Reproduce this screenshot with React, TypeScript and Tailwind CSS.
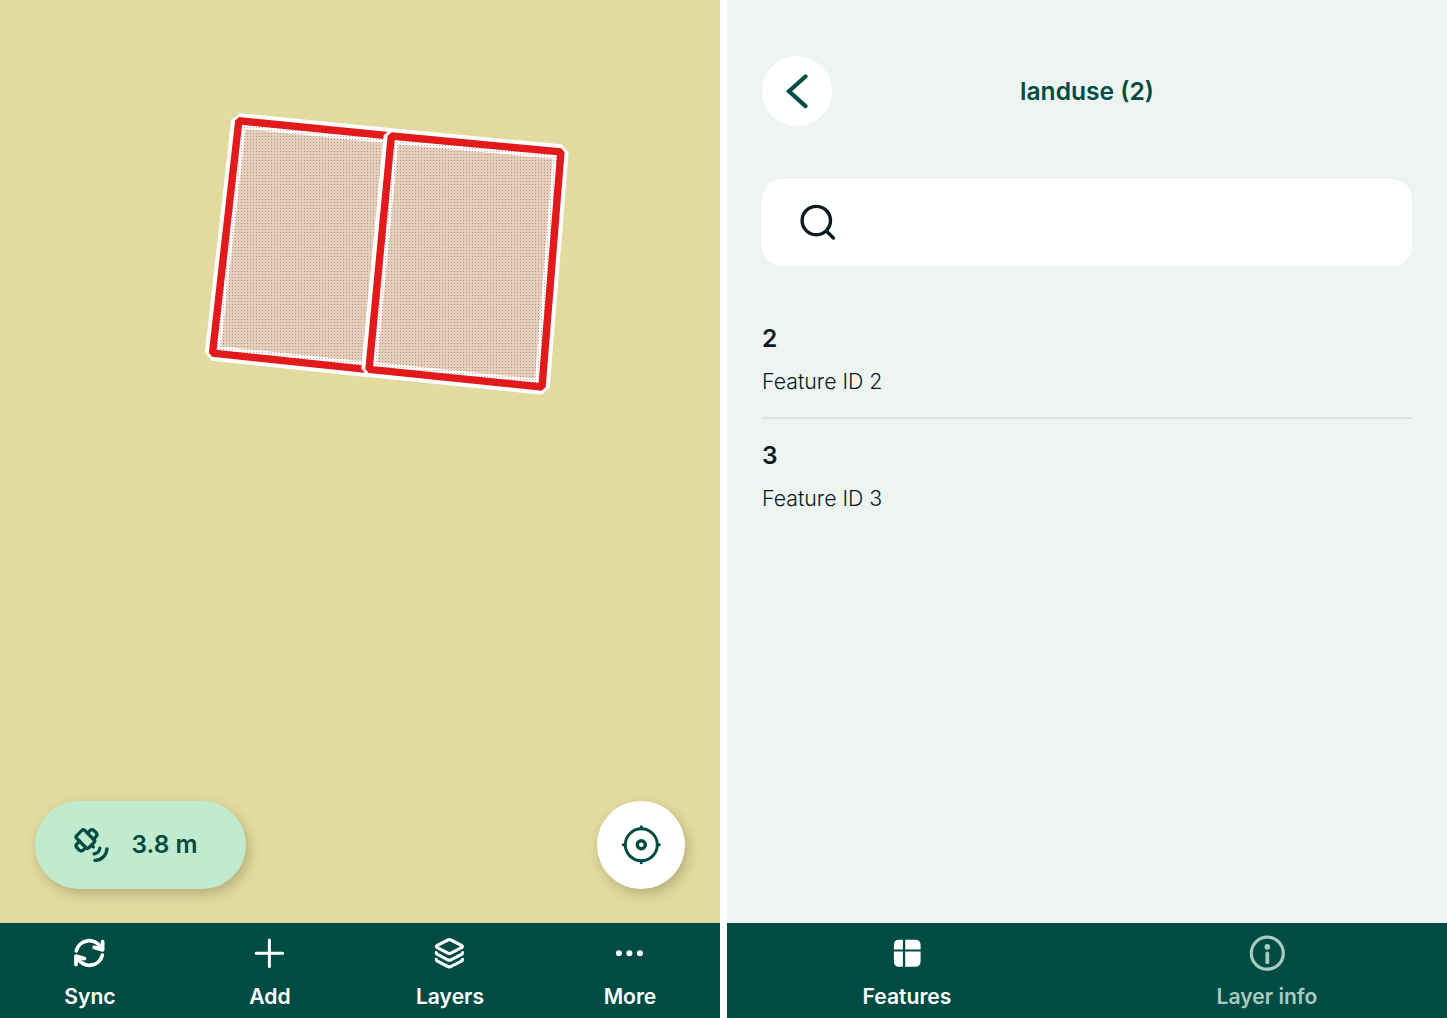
import React from "react";

type TabProps = { label: string; muted?: boolean; children: React.ReactNode };

function Tab({ label, muted, children }: TabProps) {
  return (
    <button
      className={
        "flex flex-1 flex-col items-center pt-2.5 text-[21.1px] leading-[26px] font-semibold " +
        (muted ? "text-[#a9cabd]" : "text-white")
      }
    >
      <span className="flex h-10 items-center justify-center">{children}</span>
      <span className="mt-[11px]">{label}</span>
    </button>
  );
}

function Parcel({ points }: { points: string }) {
  return (
    <g strokeLinejoin="bevel">
      <polygon points={points} fill="#e4cfba" stroke="white" strokeWidth="15.4" />
      <polygon points={points} fill="url(#dots)" />
      <polygon points={points} fill="none" stroke="#e31a1c" strokeWidth="7.4" />
    </g>
  );
}

function MapPanel() {
  return (
    <section className="flex w-[720px] flex-col bg-[#e2da9f]">
      <div className="relative flex-1">
        <svg className="absolute inset-0" width="720" height="923" viewBox="0 0 720 923">
          <defs>
            <pattern id="dots" width="3" height="3" patternUnits="userSpaceOnUse">
              <rect x="1" y="1" width="1" height="1" fill="#b97168" fillOpacity="0.65" />
            </pattern>
          </defs>
          <Parcel points="238.8,120.8 391.3,136 369,369.6 212.5,353.1" />
          <Parcel points="391.3,136 560.9,151.9 542,387 369,369.4" />
        </svg>
        <div className="absolute inset-x-[35px] bottom-[34px] flex items-center justify-between">
          <div className="flex h-[88px] w-[211px] items-center rounded-full bg-[#c1ebcf] pl-[38px] text-[#004c45] shadow-[3px_5px_12px_rgba(60,50,10,0.25)]">
            <svg width="36" height="36" viewBox="0 0 36 36" fill="none" stroke="currentColor" strokeWidth="3.3" strokeLinecap="round" strokeLinejoin="round">
              <g transform="translate(.7 .3)">
                <path d="M2.8 8.5 8.5 2.8Q9.7 1.8 10.8 2.8L20.5 12.7Q21.6 13.8 20.5 15L14.8 20.7Q13.6 21.6 12.5 20.7L2.8 10.8Q1.8 9.7 2.8 8.5Z" />
                <path d="M13.8 5.8 16.6 3Q18.3 1.6 20 3L22.6 5.6Q24 7.3 22.6 9L19.6 12" />
                <path d="M6 13.8 3 16.8Q1.6 18.5 3 20.2L5.8 23Q7.5 24.4 9.2 23L12.2 20" />
                <path d="m18.4 18.4 1.2 1.2M26.1 20.8a6.3 6.3 0 0 1-5.7 5.7M33.2 21.5a12 12 0 0 1-12 11.6" />
              </g>
            </svg>
            <span className="-mt-0.5 ml-[22.5px] text-[24.4px] font-semibold">3.8 m</span>
          </div>
          <button className="flex size-[88px] items-center justify-center rounded-full bg-white text-[#004c45] shadow-[3px_5px_12px_rgba(60,50,10,0.25)]">
            <svg width="40" height="40" viewBox="0 0 40 40" fill="none" stroke="currentColor" strokeWidth="3" strokeLinecap="round">
              <circle cx="20.3" cy="19.8" r="16" />
              <circle cx="20.3" cy="19.8" r="4" strokeWidth="3.4" />
              <path d="M20.3 1.8v2M20.3 35.8v2M2.3 19.8h2M36.3 19.8h2" />
            </svg>
          </button>
        </div>
      </div>
      <nav className="flex h-[95px] bg-[#004c45]">
        <Tab label="Sync">
          <svg className="-ml-0.5" width="34" height="34" viewBox="0 0 34 34" fill="none" stroke="currentColor" strokeWidth="3.8" strokeLinecap="round" strokeLinejoin="round">
            <path d="M4.3 14.8A13.2 13.2 0 0 1 28.8 11.8" />
            <path d="M30.6 5.6v8.2L22.2 11.4" />
            <path d="M30.3 19.2A13.2 13.2 0 0 1 5.8 22.2" />
            <path d="M4 28.4v-8.2L12.4 22.6" />
            <path d="M27.5 10.5 30.6 8v5.8ZM7.1 23.5 4 26v-5.8Z" fill="currentColor" strokeWidth="2" />
          </svg>
        </Tab>
        <Tab label="Add">
          <svg className="-ml-0.5" width="32" height="32" viewBox="0 0 32 32" fill="none" stroke="currentColor" strokeWidth="3" strokeLinecap="round">
            <path d="M16.4 3v26.4M3.2 16.2h26.4" />
          </svg>
        </Tab>
        <Tab label="Layers">
          <svg className="-ml-0.5" width="32" height="32" viewBox="0 0 32 32" fill="none" stroke="currentColor" strokeWidth="3.1" strokeLinecap="round" strokeLinejoin="round">
            <g transform="translate(.4 .2)">
              <path d="M14.5 2.8Q16 2 17.5 2.8L28.1 8.1Q30.1 9.3 28.1 10.5L17.5 15.9Q16 16.7 14.5 15.9L3.9 10.5Q1.9 9.3 3.9 8.1Z" />
              <path d="M2.8 15.3Q2.8 16.6 4 17.2L14.5 22.6Q16 23.4 17.5 22.6L28 17.2Q29.2 16.6 29.2 15.3" />
              <path d="M2.8 22Q2.8 23.3 4 23.9L14.5 29.3Q16 30.1 17.5 29.3L28 23.9Q29.2 23.3 29.2 22" />
            </g>
          </svg>
        </Tab>
        <Tab label="More">
          <svg className="-ml-0.5" width="28" height="8" viewBox="0 0 28 8" fill="currentColor">
            <circle cx="3.9" cy="4.2" r="3" />
            <circle cx="14.4" cy="4.2" r="3" />
            <circle cx="24.9" cy="4.2" r="3" />
          </svg>
        </Tab>
      </nav>
    </section>
  );
}

function FeatureRow({ id }: { id: number }) {
  return (
    <li className="flex h-[117px] flex-col border-b-2 border-[#e0e2e2] pt-[21.5px] last:border-b-0">
      <span className="text-[24.5px] leading-[30px] font-semibold">{id}</span>
      <span className="mt-[15px] text-[21.3px] leading-[26px] font-light">Feature ID {id}</span>
    </li>
  );
}

function FeaturesPanel() {
  return (
    <section className="flex w-[720px] flex-col bg-[#eef4f2]">
      <div className="flex-1 px-[35px] pt-14">
        <header className="grid grid-cols-[70px_1fr_70px] items-center text-[#004c45]">
          <button className="flex size-[70px] items-center justify-center rounded-full bg-white">
            <svg width="26" height="36" viewBox="0 0 26 36" fill="none" stroke="currentColor" strokeWidth="4.2" strokeLinecap="round" strokeLinejoin="miter">
              <path d="M21.5 3.5 5 18.3l16.5 14.8" />
            </svg>
          </button>
          <h1 className="text-center text-[24.6px] font-[565]">landuse (2)</h1>
        </header>
        <div className="mt-[53px] flex h-[87px] items-center rounded-[20px] bg-white pl-[37px] text-[#0b1a20]">
          <svg width="38" height="38" viewBox="0 0 38 38" fill="none" stroke="currentColor" strokeWidth="3.4" strokeLinecap="round">
            <circle cx="17.3" cy="16.6" r="14.2" />
            <path d="m27.6 27.2 6.8 6.8" />
          </svg>
        </div>
        <ul className="mt-[35.5px] text-[#0b1a20]">
          <FeatureRow id={2} />
          <FeatureRow id={3} />
        </ul>
      </div>
      <nav className="flex h-[95px] bg-[#004c45]">
        <Tab label="Features">
          <svg width="28" height="28" viewBox="0 0 28 28" fill="currentColor">
            <path d="M6 .8H9.9V10.4H.9V6Q.9.8 6 .8ZM12.2.8H22Q27.6.8 27.6 6V10.4H12.2ZM.9 12.6H9.9V27.8H6Q.9 27.8.9 22ZM12.2 12.6H27.6V22Q27.6 27.8 22 27.8H12.2Z" />
          </svg>
        </Tab>
        <Tab label="Layer info" muted>
          <svg width="36" height="36" viewBox="0 0 36 36" fill="none" stroke="currentColor" strokeWidth="3.2" strokeLinecap="round">
            <circle cx="18.3" cy="18.2" r="16" />
            <path d="M18.3 18.4v8.8" strokeWidth="3.8" />
            <circle cx="18.3" cy="11.9" r="2.8" fill="currentColor" stroke="none" />
          </svg>
        </Tab>
      </nav>
    </section>
  );
}

export default function App() {
  return (
    <main className="flex h-[1018px] w-[1447px] justify-between overflow-hidden bg-white font-['Inter',sans-serif]">
      <MapPanel />
      <FeaturesPanel />
    </main>
  );
}
